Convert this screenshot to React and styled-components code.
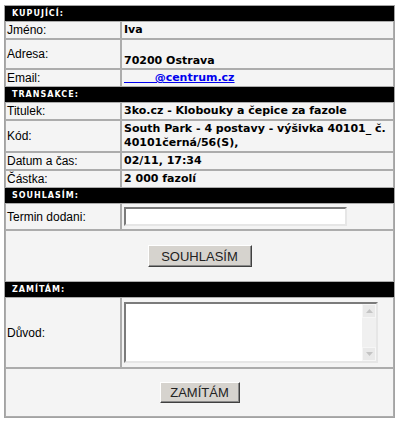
import React from "react";
import styled, { createGlobalStyle } from "styled-components";

const Global = createGlobalStyle`
  body {
    margin: 0;
    background: #fff;
  }
`;

const Page = styled.div`
  padding: 5px 0 0 4px;
`;

const Form = styled.table`
  width: 391px;
  table-layout: fixed;
  border-collapse: separate;
  border-spacing: 0;
  border: 1px solid #a3a3a3;
  background: #f4f4f4;
  font-family: "Liberation Sans", Arial, sans-serif;
  font-size: 12px;
  color: #000;
`;

const Section = styled.th`
  height: 13px;
  padding: 0 0 0 6px;
  background: #000;
  border: 1px solid #000;
  color: #fff;
  text-align: left;
  font-family: "DejaVu Sans", Verdana, sans-serif;
  font-weight: bold;
  font-size: 8px;
  letter-spacing: 1px;
  line-height: 13px;
`;

const Label = styled.td`
  height: ${(p) => p.$h || 16}px;
  padding: 0 1px;
  border: 1px solid #acacac;
  vertical-align: middle;
  line-height: 14px;
`;

const Value = styled.td`
  height: ${(p) => p.$h || 16}px;
  padding: 0 2px;
  border: 1px solid #acacac;
  vertical-align: middle;
  font-family: "DejaVu Sans", Verdana, sans-serif;
  font-weight: bold;
  font-size: 11px;
  line-height: ${(p) => p.$lh || 14}px;
`;

const Actions = styled.td`
  height: ${(p) => p.$h}px;
  padding: 0;
  border: 1px solid #acacac;
  text-align: center;
  vertical-align: middle;
`;

const Mail = styled.a`
  color: #0000ee;
  text-decoration: underline;
  white-space: pre;
`;

const TextInput = styled.input`
  display: block;
  box-sizing: border-box;
  width: 223px;
  height: 19px;
  margin: 0;
  padding: 1px 2px;
  background: #fff;
  border: 2px solid;
  border-color: #7b7b7b #e6e6e6 #e6e6e6 #7b7b7b;
  font: 12px "Liberation Sans", Arial, sans-serif;
  outline: none;
`;

const TextBox = styled.div`
  box-sizing: border-box;
  display: flex;
  width: 254px;
  height: 61px;
  background: #fff;
  border: 2px solid;
  border-color: #7b7b7b #e6e6e6 #e6e6e6 #7b7b7b;
`;

const Area = styled.textarea`
  flex: 1;
  border: 0;
  margin: 0;
  padding: 2px;
  resize: none;
  outline: none;
  overflow: hidden;
  font: 12px "Liberation Sans", Arial, sans-serif;
`;

const Scroll = styled.div`
  width: 14px;
  display: flex;
  flex-direction: column;
  justify-content: space-between;
  background: #f0f0f0;
`;

const Arrow = styled.div`
  height: 14px;
  display: flex;
  align-items: center;
  justify-content: center;
  background: #e9e9e9;
  border: 1px solid #f6f6f6;
  box-sizing: border-box;
`;

const Button = styled.button`
  box-sizing: border-box;
  width: ${(p) => p.$w}px;
  height: ${(p) => p.$h}px;
  padding: 0;
  background: #d6d3ce;
  border: 1px solid;
  border-color: #fff #404040 #404040 #fff;
  box-shadow: inset -1px -1px #8a8a8a;
  color: #222;
  font: 13px "Liberation Sans", Arial, sans-serif;
  vertical-align: middle;
`;

const Tri = ({ up }) => (
  <svg width="7" height="4" viewBox="0 0 7 4">
    <path d={up ? "M0 4 L3.5 0 L7 4 Z" : "M0 0 L3.5 4 L7 0 Z"} fill="#c4c4c4" />
  </svg>
);

const Row = ({ label, children, h, lh }) => (
  <tr>
    <Label $h={h}>{label}</Label>
    <Value $h={h} $lh={lh}>
      {children}
    </Value>
  </tr>
);

const Head = ({ children }) => (
  <tr>
    <Section colSpan={2}>{children}</Section>
  </tr>
);

export default function App() {
  return (
    <Page>
      <Global />
      <Form>
        <colgroup>
          <col style={{ width: 116 }} />
          <col style={{ width: 273 }} />
        </colgroup>
        <tbody>
          <Head>KUPUJÍCÍ:</Head>
          <Row label="Jméno:">Iva</Row>
          <Row label="Adresa:" h={28}>
            &nbsp;
            <br />
            70200 Ostrava
          </Row>
          <Row label="Email:">
            <Mail href="#">{"        @centrum.cz"}</Mail>
          </Row>
          <Head>TRANSAKCE:</Head>
          <Row label="Titulek:">3ko.cz - Klobouky a čepice za fazole</Row>
          <Row label="Kód:" h={30} lh={14}>
            South Park - 4 postavy - výšivka 40101_ č.
            <br />
            40101černá/56(S),
          </Row>
          <Row label="Datum a čas:">02/11, 17:34</Row>
          <Row label="Částka:">2 000 fazolí</Row>
          <Head>SOUHLASÍM:</Head>
          <Row label="Termin dodani:" h={25}>
            <TextInput type="text" />
          </Row>
          <tr>
            <Actions colSpan={2} $h={50}>
              <Button $w={104} $h={22}>SOUHLASÍM</Button>
            </Actions>
          </tr>
          <Head>ZAMÍTÁM:</Head>
          <Row label="Důvod:" h={69}>
            <TextBox>
              <Area />
              <Scroll>
                <Arrow>
                  <Tri up />
                </Arrow>
                <Arrow>
                  <Tri />
                </Arrow>
              </Scroll>
            </TextBox>
          </Row>
          <tr>
            <Actions colSpan={2} $h={47}>
              <Button $w={80} $h={21}>ZAMÍTÁM</Button>
            </Actions>
          </tr>
        </tbody>
      </Form>
    </Page>
  );
}
